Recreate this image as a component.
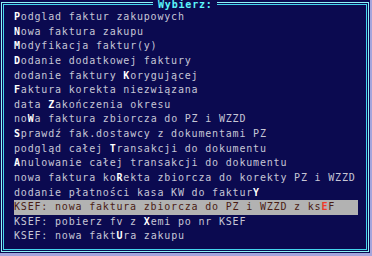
const items: [string, string, string][] = [
  ["", "P", "odglad faktur zakupowych"],
  ["", "N", "owa faktura zakupu"],
  ["", "M", "odyfikacja faktur(y)"],
  ["", "D", "odanie dodatkowej faktury"],
  ["dodanie faktury ", "K", "orygującej"],
  ["", "F", "aktura korekta niezwiązana"],
  ["data ", "Z", "akończenia okresu"],
  ["no", "W", "a faktura zbiorcza do PZ i WZZD"],
  ["", "S", "prawdź fak.dostawcy z dokumentami PZ"],
  ["podgląd całej ", "T", "ransakcji do dokumentu"],
  ["", "A", "nulowanie całej transakcji do dokumentu"],
  ["nowa faktura ko", "R", "ekta zbiorcza do korekty PZ i WZZD"],
  ["dodanie płatności kasa KW do faktur", "Y", ""],
  ["KSEF: nowa faktura zbiorcza do PZ i WZZD z ks", "E", "F"],
  ["KSEF: pobierz fv z ", "X", "emi po nr KSEF"],
  ["KSEF: nowa fakt", "U", "ra zakupu"],
];

const selected = 13;

function App() {
  return (
    <div className="w-[372px] h-[256px] bg-[#a4a4dc] font-['DejaVu_Sans_Mono',monospace]">
      <div className="relative w-[370px] h-[253px] bg-[#0b0a50] pt-[2px] pl-[1px]">
        <div className="w-[368px] h-[250px] border border-[#8ef2f6] p-px">
          <div className="h-full border border-[#45d6ee] pl-[10px] pt-[5px] text-[10px] tracking-[calc(81px/100)] whitespace-pre">
            {items.map(([a, k, b], i) => {
              const sel = i === selected;
              return (
                <div
                  key={i}
                  className={
                    sel
                      ? "w-[344px] leading-[calc(234px/16)] bg-[#b2b2b2] text-[#4a1c14]"
                      : "w-[344px] leading-[calc(234px/16)] text-[#c6c6d6]"
                  }
                >
                  {a}
                  <span className={sel ? "text-[#f03a2a] font-bold" : "text-white font-bold"}>{k}</span>
                  {b}
                </div>
              );
            })}
          </div>
        </div>
        <div className="absolute left-[153px] top-0 w-[64px] pl-[5px] bg-[#0b0a50] text-[10px] leading-[10px] tracking-[calc(81px/100)] font-bold text-[#5cf6fa]">
          Wybierz:
        </div>
      </div>
    </div>
  );
}

export default App;
